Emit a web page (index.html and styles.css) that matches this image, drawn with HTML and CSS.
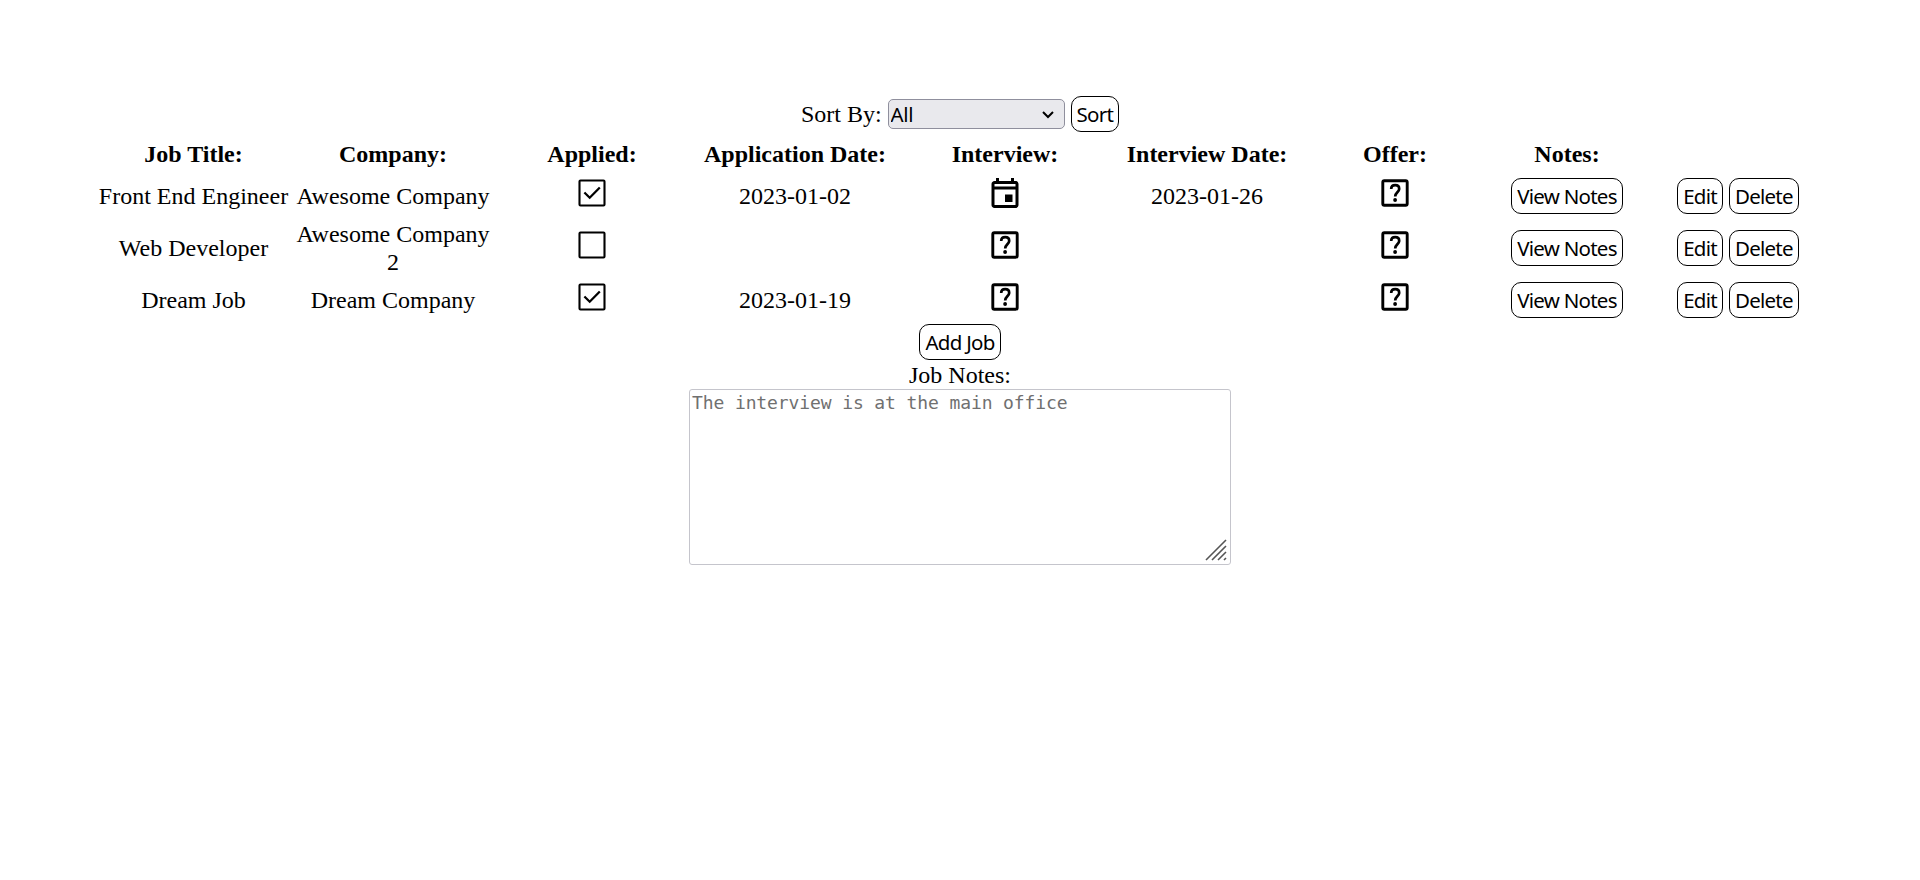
FILE: index.html
```html
<!DOCTYPE html>
<html lang="en">
<head>
<meta charset="utf-8">
<title>Jobs</title>
<link rel="stylesheet" href="styles.css">
</head>
<body>
<svg class="defs" width="0" height="0">
  <symbol id="box" viewBox="0 0 36 36"><rect x="5.5" y="5.5" width="25" height="25" rx="1" fill="none" stroke="#000" stroke-width="2.1"/></symbol>
  <symbol id="checked" viewBox="0 0 36 36"><rect x="5.5" y="5.5" width="25" height="25" rx="1" fill="none" stroke="#000" stroke-width="2.1"/><path d="M10.4 17.5l5.3 5.2L25.8 12.5" fill="none" stroke="#000" stroke-width="2.3"/></symbol>
  <symbol id="question" viewBox="0 0 36 36"><rect x="5.8" y="5.8" width="24.4" height="24.4" rx="1.5" fill="none" stroke="#000" stroke-width="2.9"/><path d="M14.2 14c0-2.3 1.6-3.8 4-3.8s4 1.5 4 3.7c0 3.2-4 3.6-4 7.5" fill="none" stroke="#000" stroke-width="2.7"/><circle cx="18.1" cy="25" r="1.9"/></symbol>
  <symbol id="calendar" viewBox="0 0 24 24"><path d="M19 4h-1V2h-2v2H8V2H6v2H5c-1.11 0-1.99.9-1.99 2L3 20c0 1.1.89 2 2 2h14c1.1 0 2-.9 2-2V6c0-1.1-.9-2-2-2zm0 16H5V9.700h14V20zm0-12.300H5V6h14v1.700zM12 13h5v5h-5z"/></symbol>
</svg>
<main class="page">
  <form class="sort">
    <label for="sort-by">Sort By:</label>
    <select id="sort-by" class="select"><option>All</option></select>
    <button type="button" class="btn">Sort</button>
  </form>
  <table class="jobs">
    <colgroup><col class="c-title"><col class="c-company"><col class="c-applied"><col class="c-appdate"><col class="c-interview"><col class="c-intdate"><col class="c-offer"><col class="c-notes"><col class="c-actions"></colgroup>
    <thead>
      <tr><th>Job Title:</th><th>Company:</th><th>Applied:</th><th>Application Date:</th><th>Interview:</th><th>Interview Date:</th><th>Offer:</th><th>Notes:</th><th></th></tr>
    </thead>
    <tbody>
      <tr>
        <td>Front End Engineer</td><td>Awesome Company</td>
        <td><svg class="icon"><use href="#checked"/></svg></td><td>2023-01-02</td>
        <td><svg class="icon"><use href="#calendar"/></svg></td><td>2023-01-26</td>
        <td><svg class="icon"><use href="#question"/></svg></td>
        <td><button class="btn">View Notes</button></td>
        <td><div class="actions"><button class="btn">Edit</button><button class="btn">Delete</button></div></td>
      </tr>
      <tr>
        <td>Web Developer</td><td><div class="wrapped">Awesome Company 2</div></td>
        <td><svg class="icon"><use href="#box"/></svg></td><td></td>
        <td><svg class="icon"><use href="#question"/></svg></td><td></td>
        <td><svg class="icon"><use href="#question"/></svg></td>
        <td><button class="btn">View Notes</button></td>
        <td><div class="actions"><button class="btn">Edit</button><button class="btn">Delete</button></div></td>
      </tr>
      <tr>
        <td>Dream Job</td><td>Dream Company</td>
        <td><svg class="icon"><use href="#checked"/></svg></td><td>2023-01-19</td>
        <td><svg class="icon"><use href="#question"/></svg></td><td></td>
        <td><svg class="icon"><use href="#question"/></svg></td>
        <td><button class="btn">View Notes</button></td>
        <td><div class="actions"><button class="btn">Edit</button><button class="btn">Delete</button></div></td>
      </tr>
    </tbody>
  </table>
  <button class="btn add">Add Job</button>
  <label class="notes-label" for="notes">Job Notes:</label>
  <div class="notes-wrap">
    <textarea id="notes" class="notes" placeholder="The interview is at the main office"></textarea>
    <svg class="grip" viewBox="0 0 22 22"><path d="M1 21L21 1M7 21L21 7M13 21l8-8M19 21l2-2" fill="none" stroke="#555" stroke-width="1.6"/></svg>
  </div>
</main>
</body>
</html>
```
FILE: styles.css
```css
* { box-sizing: border-box; }
body { margin: 0; background: #fff; color: #000; font: 24px/28px "Liberation Serif", "Times New Roman", serif; }
.defs { display: block; }
.page { display: flex; flex-direction: column; align-items: center; padding-top: 96px; }
.sort { display: flex; align-items: center; gap: 6px; height: 36px; margin-bottom: 7px; }
.select { appearance: none; width: 177px; height: 30px; padding: 0 2px; border: 1px solid #8f8f9d; border-radius: 5px; color: #000; font: 20.5px/28px "Noto Sans", sans-serif; letter-spacing: -0.4px;
  background: #e9e9ed url("data:image/svg+xml,%3Csvg xmlns='http://www.w3.org/2000/svg' width='12' height='8'%3E%3Cpath d='M1 1l5 5 5-5' fill='none' stroke='%23000' stroke-width='2'/%3E%3C/svg%3E") no-repeat right 10px top 11px; }
.btn { height: 36px; padding: 1px 5px 0; border: 1px solid #000; border-radius: 10px; background: #fff; color: #000; font: 20.5px/33px "Noto Sans", sans-serif; letter-spacing: -0.75px; white-space: nowrap; display: inline-block; vertical-align: middle; }
.jobs { width: 1733px; margin-left: 3px; table-layout: fixed; border-collapse: collapse; text-align: center; }
.jobs th, .jobs td { padding: 0; vertical-align: middle; }
.jobs th { height: 31px; padding-bottom: 1px; }
.jobs td { height: 52px; }
.c-title { width: 197px; } .c-company { width: 202px; } .c-applied { width: 196px; }
.c-appdate { width: 210px; } .c-interview { width: 210px; } .c-intdate { width: 194px; }
.c-offer { width: 182px; } .c-notes { width: 162px; } .c-actions { width: 180px; }
.wrapped { margin: -4px 0; }
.icon { display: block; width: 36px; height: 36px; margin: 0 auto 6px; }
.actions { display: flex; justify-content: center; gap: 6px; }
.add { margin-top: -2px; }
.notes-label { height: 28px; margin-top: 1px; }
.notes-wrap { position: relative; width: 542px; height: 176px; }
.notes { display: block; width: 100%; height: 100%; resize: none; padding: 2px; border: 1px solid #c5c5cc; border-radius: 3px; font: 18px/22px "DejaVu Sans Mono", monospace; letter-spacing: -0.11px; }
.notes::placeholder { color: #707070; opacity: 1; }
.grip { position: absolute; right: 4px; bottom: 4px; width: 22px; height: 22px; }
```
